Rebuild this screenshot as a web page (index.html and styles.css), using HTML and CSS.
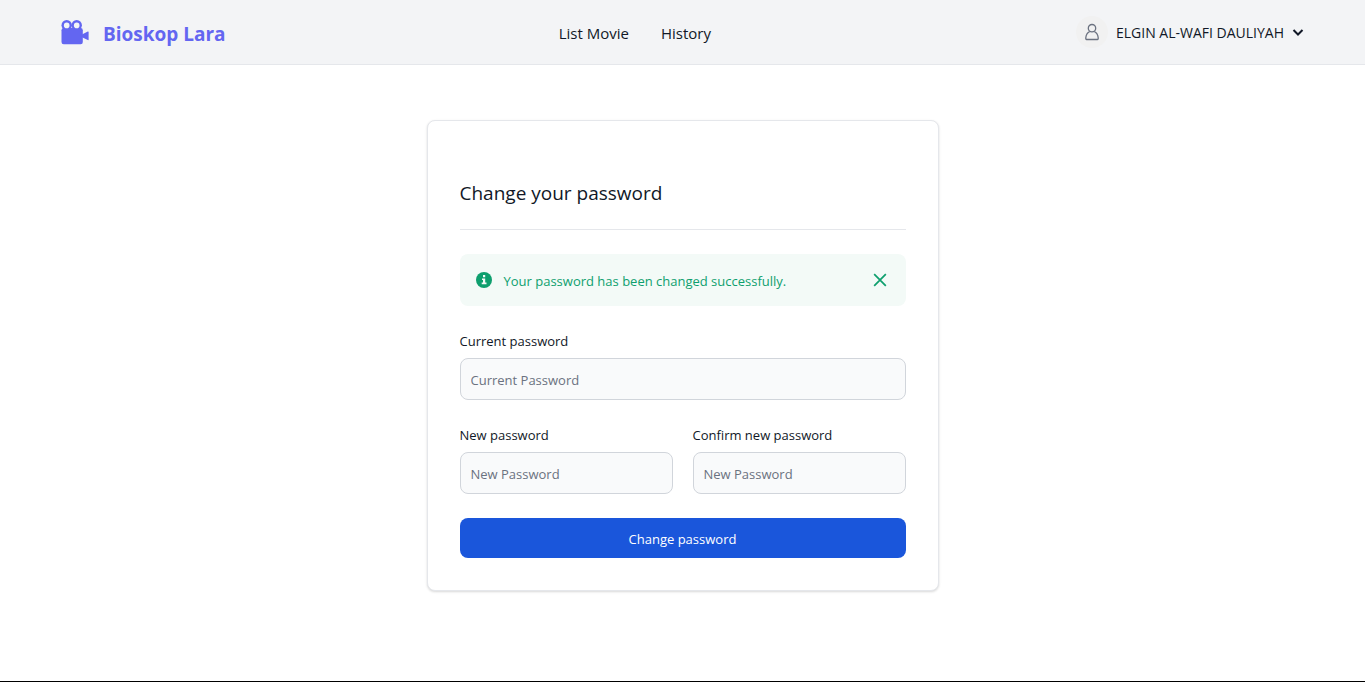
FILE: index.html
```html
<!DOCTYPE html>
<html lang="en">
<head>
<meta charset="utf-8">
<meta name="viewport" content="width=device-width, initial-scale=1">
<title>Bioskop Lara</title>
<link rel="stylesheet" href="styles.css">
</head>
<body>
<header class="navbar">
  <a class="brand" href="#">
    <svg class="brand-icon" viewBox="0 0 28 25" aria-hidden="true">
      <circle cx="5.700" cy="5.200" r="5.200"/>
      <circle cx="15.700" cy="5.200" r="5.200"/>
      <rect x="0.500" y="8" width="21.300" height="16.300" rx="2.200"/>
      <path d="M21 14.500 26.800 11.500Q27.600 11.200 27.600 12v7.600q0 .8-.8.500L21 17.300z"/>
      <circle class="lens" cx="5.700" cy="5.400" r="2.800"/>
      <circle class="lens" cx="15.700" cy="5.400" r="2.800"/>
    </svg>
    <span>Bioskop Lara</span>
  </a>
  <nav class="menu">
    <a href="#">List Movie</a>
    <a href="#">History</a>
  </nav>
  <button class="account" type="button">
    <span class="avatar">
      <svg class="avatar-icon" viewBox="0 0 16 18" aria-hidden="true"><circle cx="8" cy="5.200" r="3.700"/><path d="M5.800 8.500Q2.200 10.200 1.800 14.700q-.1 1.800.7 1.800h11q.8 0 .7-1.800Q13.800 10.200 10.200 8.500"/></svg>
    </span>
    <span>ELGIN AL-WAFI DAULIYAH</span>
    <svg class="chevron" viewBox="0 0 12 12" aria-hidden="true"><path d="M1.500 4 6 8.500 10.500 4"/></svg>
  </button>
</header>
<main class="page">
  <form class="card">
    <h1 class="title">Change your password</h1>
    <div class="alert" role="alert">
      <svg class="alert-icon" viewBox="0 0 16 16" aria-hidden="true"><circle cx="8" cy="8" r="8"/><path d="M7 3h2.200v2.200H7zM6 6.500h3.200v4H10.500V12.300H5.700v-1.800H7V8H6z"/></svg>
      <span class="alert-text">Your password has been changed successfully.</span>
      <button class="alert-close" type="button" aria-label="Close"><svg viewBox="0 0 12 12" aria-hidden="true"><path d="m1 1 10 10M11 1 1 11"/></svg></button>
    </div>
    <div class="field">
      <label for="current">Current password</label>
      <input id="current" type="password" placeholder="Current Password">
    </div>
    <div class="row">
      <div class="field">
        <label for="new">New password</label>
        <input id="new" type="password" placeholder="New Password">
      </div>
      <div class="field">
        <label for="confirm">Confirm new password</label>
        <input id="confirm" type="password" placeholder="New Password">
      </div>
    </div>
    <button class="submit" type="submit">Change password</button>
  </form>
</main>
</body>
</html>
```

FILE: styles.css
```css
*, *::before, *::after { box-sizing: border-box; }
body {
  margin: 0;
  min-height: 100vh;
  display: flex;
  flex-direction: column;
  border-bottom: 1px solid #000;
  background: #fff;
  color: #111827;
  font: 15px/24px "Open Sans", "Noto Sans", sans-serif;
}
a { color: inherit; text-decoration: none; }
button, input { font: inherit; }
button { border: 0; padding: 0; background: none; color: inherit; cursor: pointer; }
.navbar {
  display: flex;
  align-items: center;
  justify-content: space-between;
  min-height: 65px;
  padding: 0 61px;
  background: #f3f4f6;
  border-bottom: 1px solid #e5e7eb;
}
.brand {
  display: flex;
  align-items: center;
  gap: 14px;
  color: #6366f1;
  font-size: 19px;
  line-height: 28px;
  font-weight: 700;
}
.brand span { padding-top: 3px; }
.menu, .account > span + span { padding-top: 2px; }
.brand-icon { width: 28px; height: 25px; fill: currentColor; }
.brand-icon .lens { fill: #f3f4f6; }
.menu { display: flex; gap: 32px; padding-right: 32px; }
.account {
  display: flex;
  align-items: center;
  gap: 8px;
  font-size: 14px;
  line-height: 20px;
}
.avatar {
  display: grid;
  place-items: center;
  width: 32px;
  height: 32px;
  border-radius: 50%;
  background: #f1f1f1;
}
.avatar-icon { width: 16px; height: 18px; fill: none; stroke: #6b7280; stroke-width: 1.3; }
.chevron { width: 12px; height: 12px; fill: none; stroke: currentColor; stroke-width: 2; }
.page { display: flex; justify-content: center; padding: 55px 16px; }
.card {
  width: 100%;
  max-width: 512px;
  padding: 56px 32px 32px;
  border: 1px solid #e5e7eb;
  border-radius: 8px;
  background: #fff;
  box-shadow: 0 1px 3px rgba(0, 0, 0, .1), 0 1px 2px rgba(0, 0, 0, .06);
  font-size: 13px;
  line-height: 20px;
}
.title {
  margin: 0 0 24px;
  padding-bottom: 20px;
  border-bottom: 1px solid #e5e7eb;
  font-size: 19px;
  line-height: 32px;
  font-weight: 400;
}
.alert {
  display: flex;
  align-items: center;
  min-height: 52px;
  margin-bottom: 24px;
  padding: 10px 16px;
  border-radius: 8px;
  background: #f3faf7;
  color: #0e9f6e;
}
.alert-icon { width: 16px; height: 16px; margin-right: 12px; fill: currentColor; }
.alert-icon path { fill: #f3faf7; }
.alert-text { flex: 1; padding-top: 2px; }
.alert-close { display: grid; place-items: center; width: 20px; height: 20px; }
.alert-close svg { width: 14px; height: 14px; fill: none; stroke: currentColor; stroke-width: 1.5; }
.field { display: flex; flex-direction: column; gap: 7px; margin-bottom: 24px; }
.field label { padding-top: 1px; }
.field input {
  width: 100%;
  height: 42px;
  padding: 12px 10px 10px;
  border: 1px solid #d1d5db;
  border-radius: 8px;
  background: #f9fafb;
  color: #111827;
}
.field input::placeholder { color: #6b7280; opacity: 1; }
.row { display: grid; grid-template-columns: 1fr 1fr; gap: 20px; }
.submit {
  display: block;
  width: 100%;
  height: 40px;
  padding-top: 2px;
  border-radius: 8px;
  background: #1a56db;
  color: #fff;
}
```
